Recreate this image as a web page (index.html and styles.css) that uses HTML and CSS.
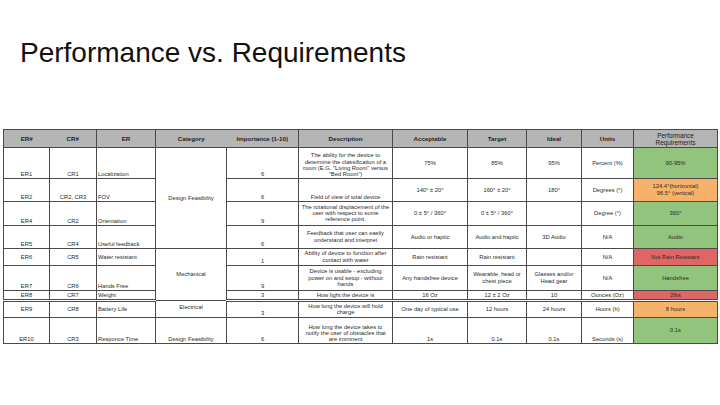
FILE: index.html
```html
<!DOCTYPE html>
<html>
<head>
<meta charset="utf-8">
<link rel="stylesheet" href="styles.css">
</head>
<body>
<div class="slide">
  <h1 class="title">Performance vs. Requirements</h1>
  <table class="req">
    <colgroup>
      <col class="c1"><col class="c2"><col class="c3"><col class="c4"><col class="c5"><col class="c6"><col class="c7"><col class="c8"><col class="c9"><col class="c10"><col class="c11">
    </colgroup>
    <thead>
      <tr class="rh">
        <th class="nr">ER#</th>
        <th class="nl">CR#</th>
        <th>ER</th>
        <th class="nr">Category</th>
        <th class="nl">Importance (1-10)</th>
        <th>Description</th>
        <th>Acceptable</th>
        <th>Target</th>
        <th>Ideal</th>
        <th>Units</th>
        <th class="thin">Performance<br>Requirements</th>
      </tr>
    </thead>
    <tbody>
      <tr class="r1">
        <td class="b">ER1</td>
        <td class="b">CR1</td>
        <td class="b l">Localization</td>
        <td rowspan="4">Design Feasibility</td>
        <td class="b">6</td>
        <td class="b">The ability for the device to determine the classification of a room (E.G. "Living Room" versus "Bed Room")</td>
        <td>75%</td>
        <td>85%</td>
        <td>95%</td>
        <td>Percent (%)</td>
        <td class="green">90-95%</td>
      </tr>
      <tr class="r2">
        <td class="b">ER2</td>
        <td class="b">CR2, CR3</td>
        <td class="b l">FOV</td>
        <td class="b">6</td>
        <td class="b">Field of view of total device</td>
        <td>140° ± 20°</td>
        <td>160° ± 20°</td>
        <td>180°</td>
        <td>Degrees (°)</td>
        <td class="orange">124.4°(horizontal)<br>96.5° (vertical)</td>
      </tr>
      <tr class="r3">
        <td class="b">ER4</td>
        <td class="b">CR2</td>
        <td class="b l">Orientation</td>
        <td class="b">9</td>
        <td>The rotational displacement of the user with respect to some reference point.</td>
        <td>0 ± 5° / 360°</td>
        <td>0 ± 5° / 360°</td>
        <td></td>
        <td>Degree (°)</td>
        <td class="green">360°</td>
      </tr>
      <tr class="r4">
        <td class="b">ER5</td>
        <td class="b">CR4</td>
        <td class="b l">Useful feedback</td>
        <td class="b">6</td>
        <td>Feedback that user can easily understand and interpret</td>
        <td>Audio or haptic</td>
        <td>Audio and haptic</td>
        <td>3D Audio</td>
        <td>N/A</td>
        <td class="green">Audio</td>
      </tr>
      <tr class="r5">
        <td>ER6</td>
        <td>CR5</td>
        <td class="l">Water resistant</td>
        <td rowspan="3">Mechanical</td>
        <td class="b">1</td>
        <td>Ability of device to function after contact with water</td>
        <td>Rain resistant</td>
        <td>Rain resistant</td>
        <td></td>
        <td>N/A</td>
        <td class="red">Not Rain Resistant</td>
      </tr>
      <tr class="r6">
        <td class="b">ER7</td>
        <td class="b">CR6</td>
        <td class="b l">Hands Free</td>
        <td class="b">9</td>
        <td>Device is usable - excluding power on and setup - without hands</td>
        <td>Any handsfree device</td>
        <td>Wearable, head or chest piece</td>
        <td>Glasses and/or Head gear</td>
        <td>N/A</td>
        <td class="green">Handsfree</td>
      </tr>
      <tr class="r7">
        <td>ER8</td>
        <td>CR7</td>
        <td class="l">Weight</td>
        <td>3</td>
        <td>How light the device is</td>
        <td>16 Oz</td>
        <td>12 ± 2 Oz</td>
        <td>10</td>
        <td>Ounces (Oz)</td>
        <td class="red">2lbs</td>
      </tr>
      <tr class="r8">
        <td>ER9</td>
        <td>CR8</td>
        <td class="l">Battery Life</td>
        <td class="up">Electrical</td>
        <td class="b">3</td>
        <td>How long the device will hold charge</td>
        <td>One day of typical use</td>
        <td>12 hours</td>
        <td>24 hours</td>
        <td>Hours (h)</td>
        <td class="orange">8 hours</td>
      </tr>
      <tr class="r9">
        <td class="b">ER10</td>
        <td class="b">CR3</td>
        <td class="b l">Responce Time</td>
        <td class="b">Design Feasibility</td>
        <td class="b">6</td>
        <td class="b">How long the device takes to notify the user of obstacles that are imminent</td>
        <td class="b">1s</td>
        <td class="b">0.1s</td>
        <td class="b">0.1s</td>
        <td class="b">Seconds (s)</td>
        <td class="green">0.1s</td>
      </tr>
    </tbody>
  </table>
</div>
</body>
</html>
```

FILE: styles.css
```css
html, body {
  margin: 0;
  padding: 0;
  background: #ffffff;
}

.slide {
  width: 720px;
  height: 405px;
  overflow: hidden;
  padding-top: 37px;
  box-sizing: border-box;
}

.title {
  margin: 0 0 0 20px;
  font-family: "Liberation Sans", Arial, sans-serif;
  font-weight: normal;
  font-size: 28px;
  line-height: 32px;
  height: 92px;
  color: #111111;
}

.req {
  margin-left: 3px;
  width: 714px;
  table-layout: fixed;
  border-collapse: collapse;
  font-family: "Liberation Sans", Arial, sans-serif;
  color: #2a2a2a;
}

.c1 { width: 46px; }
.c2 { width: 47px; }
.c3 { width: 59px; }
.c4 { width: 71px; }
.c5 { width: 72px; }
.c6 { width: 94px; }
.c7 { width: 75px; }
.c8 { width: 59px; }
.c9 { width: 55px; }
.c10 { width: 52px; }
.c11 { width: 84px; }

.req th, .req td {
  border: 1px solid #4a4a4a;
  padding: 0 2px;
  text-align: center;
  vertical-align: middle;
  overflow: hidden;
}

.req th {
  background: #b5b5b5;
  font-size: 6.2px;
  line-height: 7px;
  font-weight: bold;
  color: #222222;
}

.req th.thin {
  font-weight: normal;
  font-size: 6.4px;
}

.req th.nr { border-right-style: hidden; }
.req th.nl { border-left-style: hidden; }

.req td {
  font-size: 5.8px;
  line-height: 6.3px;
  padding-bottom: 0.5px;
}

.req td.b { vertical-align: bottom; }
.req td.l { text-align: left; padding-left: 1px; }
.req td.up { vertical-align: top; padding-top: 3px; }

.green { background: #93c47d; }
.orange { background: #f6b26b; }
.red { background: #e06666; }

.rh { height: 18px; }
.r1 { height: 31px; }
.r2 { height: 23px; }
.r3 { height: 24px; }
.r4 { height: 23px; }
.r5 { height: 17px; }
.r6 { height: 25px; }
.r7 { height: 10px; }
.r8 { height: 17px; }
.r9 { height: 26px; }

.r7 td { border-bottom: 3px double #4a4a4a; }
```
